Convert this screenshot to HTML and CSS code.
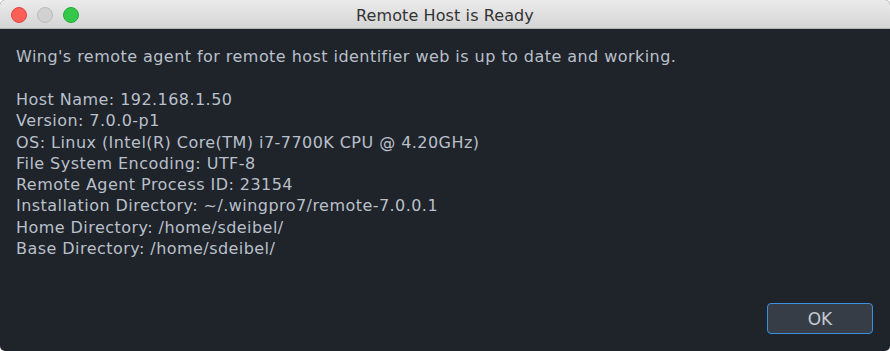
FILE: index.html
```html
<!DOCTYPE html>
<html>
<head>
<meta charset="utf-8">
<link rel="stylesheet" href="styles.css">
</head>
<body>
<div class="window">
  <div class="titlebar">
    <div class="lights">
      <span class="light red"></span>
      <span class="light gray"></span>
      <span class="light green"></span>
    </div>
    <div class="title">Remote Host is Ready</div>
  </div>
  <div class="content">
    <p class="intro">Wing's remote agent for remote host identifier web is up to date and working.</p>
    <div class="info">
      <div>Host Name: 192.168.1.50</div>
      <div>Version: 7.0.0-p1</div>
      <div>OS: Linux (Intel(R) Core(TM) i7-7700K CPU @ 4.20GHz)</div>
      <div>File System Encoding: UTF-8</div>
      <div>Remote Agent Process ID: 23154</div>
      <div>Installation Directory: ~/.wingpro7/remote-7.0.0.1</div>
      <div>Home Directory: /home/sdeibel/</div>
      <div>Base Directory: /home/sdeibel/</div>
    </div>
    <div class="actions">
      <button class="btn">OK</button>
    </div>
  </div>
</div>
</body>
</html>
```
FILE: styles.css
```css
html, body {
  margin: 0;
  padding: 0;
  background: #ffffff;
}
.window {
  width: 890px;
  height: 351px;
  border-radius: 5px;
  overflow: hidden;
  background: #1f232a;
  display: flex;
  flex-direction: column;
  font-family: "DejaVu Sans", "Liberation Sans", sans-serif;
}
.titlebar {
  position: relative;
  height: 28px;
  background: linear-gradient(#ebebeb, #d5d5d5);
  border-bottom: 1px solid #b3b3b3;
  display: flex;
  align-items: center;
  justify-content: center;
  flex: none;
}
.lights {
  position: absolute;
  left: 11px;
  top: 7px;
  display: flex;
  gap: 10px;
}
.light {
  width: 14px;
  height: 14px;
  border-radius: 50%;
  border: 1px solid transparent;
}
.red { background: #fc5f57; border-color: #e0443e; }
.gray { background: #d1d1d1; border-color: #bcbcbc; }
.green { background: #34c84a; border-color: #26a838; }
.title {
  font-size: 16px;
  color: #333333;
  padding-top: 3px;
  letter-spacing: 0.1px;
}
.content {
  flex: 1;
  display: flex;
  flex-direction: column;
  padding: 17px 17px 17px 16px;
  color: #b9c0ca;
  font-size: 16px;
  letter-spacing: 0.45px;
}
.intro {
  margin: 0 0 22px 0;
  line-height: 21px;
}
.info {
  line-height: 21.3px;
}
.actions {
  margin-top: auto;
  display: flex;
  justify-content: flex-end;
}
.btn {
  width: 106px;
  height: 31px;
  background: #373d46;
  border: 1px solid #3d8fe0;
  border-radius: 4px;
  color: #c3c9d2;
  font-family: "DejaVu Sans", "Liberation Sans", sans-serif;
  font-size: 17px;
  padding: 0;
}
```
